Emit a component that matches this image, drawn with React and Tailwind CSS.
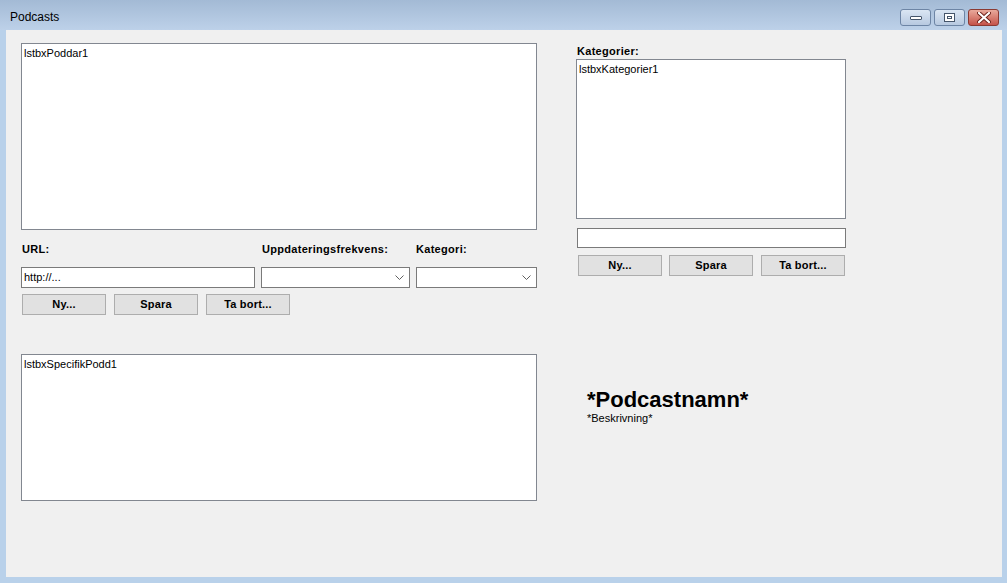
import React from 'react';

const font = { fontFamily: '"Liberation Sans", Arial, sans-serif' };

const Btn = ({ children }) => (
  <button className="w-[84px] h-[21px] bg-[#e1e1e1] border border-[#adadad] text-[11px] font-bold text-black leading-none tracking-[0.2px]">
    {children}
  </button>
);

const Combo = ({ w }) => (
  <div className={`${w} h-[21px] bg-white border border-[#7a7a7a] flex items-center justify-end pr-[5px]`}>
    <svg width="9" height="5" viewBox="0 0 9 5" fill="none" stroke="#606060" strokeWidth="1">
      <path d="M0.5 0.5 L4.5 4.5 L8.5 0.5" />
    </svg>
  </div>
);

const ListBox = ({ className, label }) => (
  <div className={`${className} bg-white border border-[#828790] px-[2px] pt-[3px] text-[11px] text-black leading-[13px]`}>
    {label}
  </div>
);

const CaptionBtn = ({ children, close }) => (
  <div
    className={`w-[31px] h-[17px] rounded-[3px] border flex items-center justify-center ${
      close
        ? 'border-[#8b3a32] bg-gradient-to-b from-[#e8a99b] to-[#c4524a]'
        : 'border-[#6d85a5] bg-gradient-to-b from-[#dbe6f3] to-[#b7c9e0]'
    }`}
  >
    {children}
  </div>
);

export default function App() {
  return (
    <div className="w-[1007px] h-[583px] bg-[#b9d1ea] flex flex-col overflow-hidden" style={font}>
      {/* Title bar */}
      <div className="h-[30px] flex items-start bg-gradient-to-b from-[#a3bad5] to-[#bdd1e9]">
        <div className="pl-[10px] pt-[10px] text-[12px] text-black leading-[15px]">Podcasts</div>
        <div className="ml-auto flex gap-[3px] pt-[9px] pr-[8px]">
          <CaptionBtn>
            <div className="w-[12px] h-[4px] bg-white border border-[#45556a] rounded-[1px]" />
          </CaptionBtn>
          <CaptionBtn>
            <div className="w-[11px] h-[9px] bg-white border border-[#45556a] flex items-center justify-center">
              <div className="w-[5px] h-[3px] border border-[#45556a]" />
            </div>
          </CaptionBtn>
          <CaptionBtn close>
            <svg width="14" height="11" viewBox="0 0 14 11">
              <path d="M2 1 L12 10 M12 1 L2 10" stroke="#6a2018" strokeWidth="4" strokeLinecap="round" />
              <path d="M2 1 L12 10 M12 1 L2 10" stroke="#ffffff" strokeWidth="2.2" strokeLinecap="round" />
            </svg>
          </CaptionBtn>
        </div>
      </div>

      {/* Client area */}
      <div className="flex-1 mx-[6px] mr-[5px] mb-[6px] bg-[#f0f0f0] flex">
        {/* Left column */}
        <div className="ml-[15px] mt-[13px] w-[516px] flex flex-col">
          <ListBox className="h-[187px]" label="lstbxPoddar1" />
          <div className="flex mt-[13px] text-[11px] font-bold leading-[13px] h-[13px] tracking-[0.3px]">
            <div className="w-[240px] pl-[1px]">URL:</div>
            <div className="w-[155px] pl-[1px]">Uppdateringsfrekvens:</div>
            <div>Kategori:</div>
          </div>
          <div className="flex gap-[6px] mt-[11px]">
            <div className="w-[234px] h-[21px] bg-white border border-[#7a7a7a] px-[2px] text-[11px] leading-[19px] text-black">
              http://...
            </div>
            <Combo w="w-[149px]" />
            <Combo w="w-[121px]" />
          </div>
          <div className="flex gap-[8px] mt-[6px] ml-[1px]">
            <Btn>Ny...</Btn>
            <Btn>Spara</Btn>
            <Btn>Ta bort...</Btn>
          </div>
          <ListBox className="h-[147px] mt-[39px]" label="lstbxSpecifikPodd1" />
        </div>

        {/* Right column */}
        <div className="ml-[39px] mt-[15px] w-[270px] flex flex-col">
          <div className="text-[11px] font-bold leading-[13px] h-[13px] pl-[1px] tracking-[0.3px]">Kategorier:</div>
          <ListBox className="h-[160px] mt-[1px]" label="lstbxKategorier1" />
          <div className="ml-[1px] h-[20px] mt-[9px] bg-white border border-[#7a7a7a]" />
          <div className="flex items-start gap-[7px] mt-[7px] ml-[2px]">
            <Btn>Ny...</Btn>
            <Btn>Spara</Btn>
            <div className="flex ml-[1px]">
              <Btn>Ta bort...</Btn>
            </div>
          </div>
          <div className="ml-[11px] mt-[111px] text-[22px] font-bold leading-[25px] text-black">*Podcastnamn*</div>
          <div className="ml-[11px] text-[11px] leading-[13px] text-black">*Beskrivning*</div>
        </div>
      </div>
    </div>
  );
}
